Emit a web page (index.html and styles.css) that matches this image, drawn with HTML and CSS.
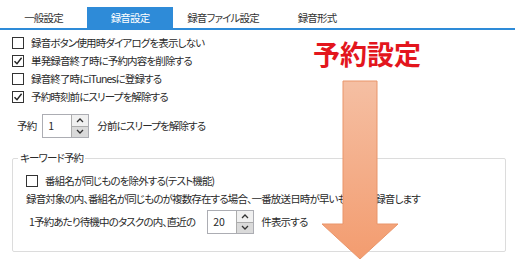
FILE: index.html
```html
<!DOCTYPE html>
<html lang="ja">

<head>
    <meta charset="UTF-8" />
    <meta name="viewport" content="width=device-width, initial-scale=1.0" />
    <title>録音設定</title>

    <link rel="stylesheet" href="styles.css">

</head>

<body>
    <div class="tabs">
        <div class="tab tab-general">一般設定</div>
        <div class="tab tab-record active">録音設定</div>
        <div class="tab tab-file">録音ファイル設定</div>
        <div class="tab tab-format">録音形式</div>
    </div>

    <div class="content">
        <div class="opts">
            <label class="opt"><span class="cb"></span>録音ボタン使用時ダイアログを表示しない</label>
            <label class="opt"><span class="cb checked"><svg viewBox="0 0 10 10"><path d="M1.5 5.2 L4 7.8 L8.6 1.8" /></svg></span>単発録音終了時に予約内容を削除する</label>
            <label class="opt"><span class="cb"></span>録音終了時にiTunesに登録する</label>
            <label class="opt"><span class="cb checked"><svg viewBox="0 0 10 10"><path d="M1.5 5.2 L4 7.8 L8.6 1.8" /></svg></span>予約時刻前にスリープを解除する</label>
        </div>

        <div class="spin-row wake-row">
            <span>予約</span>
            <div class="spin">
                <div class="spin-val">1</div>
                <div class="spin-btns">
                    <div class="spin-up"><svg viewBox="0 0 8 5"><path d="M1 4 L4 1 L7 4" /></svg></div>
                    <div class="spin-down"><svg viewBox="0 0 8 5"><path d="M1 1 L4 4 L7 1" /></svg></div>
                </div>
            </div>
            <span>分前にスリープを解除する</span>
        </div>

        <fieldset class="group">
            <legend>キーワード予約</legend>
            <label class="opt"><span class="cb"></span>番組名が同じものを除外する(テスト機能)</label>
            <div class="note">録音対象の内、番組名が同じものが複数存在する場合、一番放送日時が早いものだけ録音します</div>
            <div class="spin-row task-row">
                <span>1予約あたり待機中のタスクの内、直近の</span>
                <div class="spin">
                    <div class="spin-val">20</div>
                    <div class="spin-btns">
                        <div class="spin-up"><svg viewBox="0 0 8 5"><path d="M1 4 L4 1 L7 4" /></svg></div>
                        <div class="spin-down"><svg viewBox="0 0 8 5"><path d="M1 1 L4 4 L7 1" /></svg></div>
                    </div>
                </div>
                <span>件表示する</span>
            </div>
        </fieldset>
    </div>

    <!-- annotation overlay -->
    <div class="title">予約設定</div>
    <svg class="arrow" viewBox="0 0 78 180">
        <defs>
            <linearGradient id="arrowFill" x1="0" y1="0" x2="0" y2="1">
                <stop offset="0" stop-color="#f5bfa3" />
                <stop offset="1" stop-color="#f39c6f" />
            </linearGradient>
        </defs>
        <path d="M22 1 H56 V144 H77 L39 179 L1 144 H22 Z" fill="url(#arrowFill)" stroke="#e9956a" stroke-width="1" />
    </svg>
</body>

</html>
```

FILE: styles.css
```css
html,
body {
    margin: 0;
    padding: 0;
    background: #fff;
}

body {
    position: relative;
    width: 515px;
    height: 259px;
    overflow: hidden;
    font-family: "Noto Sans CJK JP", "Noto Sans", sans-serif;
    font-size: 10.5px;
    letter-spacing: -0.85px;
    font-feature-settings: "palt";
    color: #2a2a2a;
    line-height: 18px;
}

/* tabs */
.tabs {
    display: flex;
    padding-top: 7px;
    border-bottom: 2px solid #2e8bd8;
}

.tab {
    height: 21px;
    line-height: 21px;
    text-align: center;
    color: #333;
}

.tab-general {
    width: 87px;
}

.tab-record {
    width: 86px;
}

.tab-file {
    width: 100px;
}

.tab-format {
    width: 88px;
}

.tab.active {
    background: #2e8bd8;
    color: #fff;
}

/* options */
.content {
    padding-top: 4px;
}

.opts {
    padding-left: 12px;
}

.opt {
    display: flex;
    align-items: center;
    height: 18px;
}

.cb {
    display: inline-flex;
    align-items: center;
    justify-content: center;
    width: 10px;
    height: 10px;
    border: 1px solid #333;
    background: #fff;
    margin-right: 7px;
    flex-shrink: 0;
}

.cb svg {
    width: 10px;
    height: 10px;
}

.cb svg path {
    fill: none;
    stroke: #222;
    stroke-width: 1.4;
}

/* spinners */
.spin-row {
    display: flex;
    align-items: center;
    height: 24px;
}

.wake-row {
    margin-top: 8px;
    padding-left: 17px;
    gap: 6px;
}

.wake-row .spin {
    margin-right: 2px;
}

.spin {
    display: flex;
    height: 22px;
    border: 1px solid #acadb3;
    background: #fff;
    letter-spacing: 0;
}

.spin-val {
    width: 23px;
    padding-left: 5px;
    line-height: 22px;
}

.spin-btns {
    display: flex;
    flex-direction: column;
    width: 16px;
    border-left: 1px solid #acacac;
}

.spin-btns div {
    flex: 1;
    display: flex;
    align-items: center;
    justify-content: center;
}

.spin-up {
    background: #f0f0f0;
    border-bottom: 1px solid #acacac;
}

.spin-down {
    background: #dadada;
}

.spin-btns svg {
    width: 8px;
    height: 5px;
}

.spin-btns path {
    fill: none;
    stroke: #333;
    stroke-width: 1.3;
}

/* keyword group */
.group {
    margin: 13px 9px 0 12px;
    padding: 7px 13px 17px 13px;
    border: 1px solid #dcdcdc;
    border-radius: 2px;
}

.group legend {
    margin-left: -8px;
    padding: 0 2px;
    line-height: 14px;
}

.note {
    height: 18px;
}

.task-row {
    margin-top: 2px;
    padding-left: 3px;
    gap: 7px;
}

.task-row .spin {
    margin-left: 5px;
}

/* annotation */
.title {
    position: absolute;
    left: 313px;
    top: 38px;
    font-size: 27px;
    line-height: 32px;
    font-weight: bold;
    letter-spacing: 0;
    color: #e3161d;
    font-feature-settings: normal;
}

.arrow {
    position: absolute;
    left: 321px;
    top: 80px;
    width: 78px;
    height: 180px;
}
```
